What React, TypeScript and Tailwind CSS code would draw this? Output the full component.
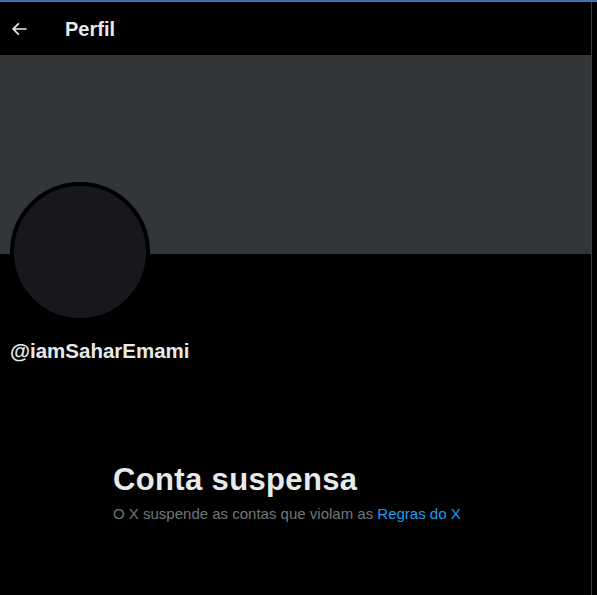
import React from "react";

export default function App() {
  return (
    <div
      className="w-[597px] h-[595px] bg-black overflow-hidden flex flex-col"
      style={{ fontFamily: '"Liberation Sans", Arial, sans-serif' }}
    >
      <div className="h-[2px] w-full bg-[#3c6fb8] shrink-0" />
      <div className="flex flex-1 min-h-0">
        <div className="w-[592px] border-r border-[#3a3d40] flex flex-col">
          <div className="h-[53px] flex items-center shrink-0">
            <svg
              viewBox="0 0 24 24"
              className="w-[20px] h-[20px] ml-[9px] fill-[#e7e9ea]"
            >
              <path d="M7.414 13l5.043 5.04-1.414 1.42L3.586 12l7.457-7.46 1.414 1.42L7.414 11H21v2H7.414z" />
            </svg>
            <div className="ml-[36px] text-[20px] font-bold text-[#e7e9ea] leading-none">
              Perfil
            </div>
          </div>
          <div className="h-[199px] bg-[#333639] shrink-0" />
          <div className="pl-[10px] -mt-[72px] shrink-0">
            <div className="w-[140px] h-[140px] rounded-full border-[4px] border-black bg-[#16181c]" />
          </div>
          <div className="pl-[10px] mt-[18px] text-[20.5px] font-bold text-[#e7e9ea] leading-[22px]">
            @iamSaharEmami
          </div>
          <div className="pl-[113px] mt-[100px]">
            <div className="text-[31px] font-bold tracking-[0.35px] text-[#e7e9ea] leading-[36px]">
              Conta suspensa
            </div>
            <div className="mt-[6px] text-[15px] text-[#71767b] leading-[20px]">
              O X suspende as contas que violam as{" "}
              <span className="text-[#1d9bf0]">Regras do X</span>
            </div>
          </div>
        </div>
      </div>
    </div>
  );
}
